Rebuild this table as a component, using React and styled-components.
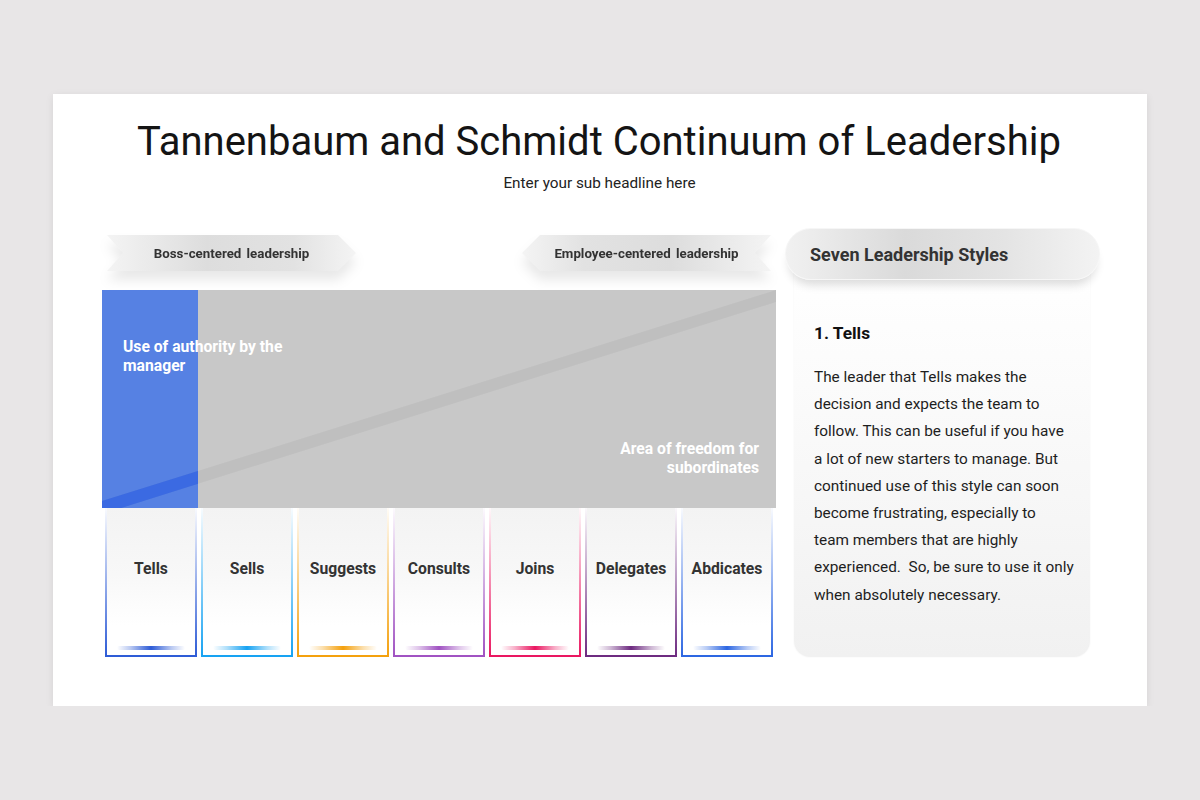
import React from "react";
import styled, { createGlobalStyle } from "styled-components";

const Global = createGlobalStyle`
  html, body { margin: 0; padding: 0; background: #e8e6e7; }
  body { font-family: Roboto, "Liberation Sans", Arial, sans-serif; }
`;

const Slide = styled.div`
  width: 1094px;
  height: 612px;
  margin: 94px auto 0;
  background: #fff;
  box-shadow: 0 2px 8px rgba(0, 0, 0, 0.08);
  box-sizing: border-box;
  padding: 0 47px 0 49px;
  display: flex;
  flex-direction: column;
`;

const Title = styled.h1`
  margin: 24px 0 0 -4px;
  font-family: Roboto, "Liberation Sans", sans-serif;
  font-weight: 400;
  font-size: 40px;
  line-height: 48px;
  color: #141414;
  text-align: center;
`;

const Sub = styled.div`
  margin: 7px 0 0 -3px;
  font-size: 15.3px;
  line-height: 20px;
  color: #222;
  text-align: center;
`;

const Main = styled.div`
  margin-top: 35px;
  display: flex;
  gap: 9px;
`;

const LeftCol = styled.div`
  width: 674px;
  padding-top: 7px;
  display: flex;
  flex-direction: column;
`;

const ArrowRow = styled.div`
  display: flex;
  justify-content: space-between;
  padding: 0 5px;
`;

const ArrowWrap = styled.div`
  filter: drop-shadow(0 9px 6px rgba(0, 0, 0, 0.09));
`;

const Arrow = styled.div`
  width: 249px;
  height: 36px;
  display: flex;
  align-items: center;
  justify-content: center;
  font-size: 13.3px;
  font-weight: 700;
  word-spacing: 2px;
  color: #333;
  background: ${(p) =>
    p.$dir === "right"
      ? "linear-gradient(90deg, #f4f4f4 0%, #dddddd 40%, #e2e2e2 75%, #f4f4f4 100%)"
      : "linear-gradient(90deg, #f4f4f4 0%, #e2e2e2 25%, #dddddd 60%, #f4f4f4 100%)"};
  clip-path: ${(p) =>
    p.$dir === "right"
      ? "polygon(0 0, calc(100% - 18px) 0, 100% 50%, calc(100% - 18px) 100%, 0 100%, 16px 50%)"
      : "polygon(18px 0, 100% 0, calc(100% - 16px) 50%, 100% 100%, 18px 100%, 0 50%)"};
`;

const Chart = styled.div`
  position: relative;
  margin-top: 19px;
  height: 218px;
  display: flex;
  overflow: hidden;
`;

const BlueCol = styled.div`
  width: 96px;
  background: #5681e3;
`;

const GrayArea = styled.div`
  flex: 1;
  background: #c8c8c8;
`;

const Band = styled.svg`
  position: absolute;
  left: 0;
  top: 0;
`;

const LabelLayer = styled.div`
  position: absolute;
  inset: 0;
  padding: 47px 17px 31px 21px;
  display: flex;
  flex-direction: column;
  justify-content: space-between;
`;

const ChartLabel = styled.div`
  font-size: 15.7px;
  font-weight: 700;
  line-height: 19px;
  color: #fff;
  text-align: ${(p) => (p.$right ? "right" : "left")};
  align-self: ${(p) => (p.$right ? "flex-end" : "flex-start")};
`;

const Cards = styled.div`
  display: flex;
  justify-content: space-between;
  padding: 0 3px;
`;

const Card = styled.div`
  width: 92px;
  height: 149px;
  box-sizing: border-box;
  padding: 0 2px 2px;
  display: flex;
  background: linear-gradient(to bottom, ${(p) => p.$c}08 0%, ${(p) => p.$c}66 40%, ${(p) => p.$c} 100%);
`;

const CardInner = styled.div`
  flex: 1;
  display: flex;
  flex-direction: column;
  align-items: center;
  padding-top: 50px;
  background: linear-gradient(to bottom, #f3f3f3 0%, #f8f8f8 45%, #ffffff 80%);
`;

const CardLabel = styled.div`
  font-size: 15.7px;
  font-weight: 700;
  line-height: 22px;
  color: #333;
  white-space: nowrap;
`;

const Glow = styled.div`
  margin-top: auto;
  margin-bottom: 5px;
  width: 68px;
  height: 4px;
  border-radius: 2px;
  background: linear-gradient(
    90deg,
    ${(p) => p.$c}00 0%,
    ${(p) => p.$c}55 20%,
    ${(p) => p.$c} 50%,
    ${(p) => p.$c}55 80%,
    ${(p) => p.$c}00 100%
  );
`;

const RightCol = styled.div`
  width: 315px;
  display: flex;
  flex-direction: column;
`;

const Pill = styled.div`
  position: relative;
  z-index: 1;
  height: 52px;
  border-radius: 26px;
  box-sizing: border-box;
  padding-left: 24px;
  display: flex;
  align-items: center;
  font-size: 18px;
  font-weight: 700;
  color: #333;
  border: 1px solid #f6f6f6;
  background: linear-gradient(90deg, #f1f1f1 0%, #dadada 38%, #e4e4e4 70%, #f3f3f3 100%);
  box-shadow: 0 9px 10px -4px rgba(0, 0, 0, 0.14);
`;

const Body = styled.div`
  margin: -12px 10px 0 9px;
  height: 389px;
  box-sizing: border-box;
  padding: 52px 20px 0;
  border-radius: 0 0 16px 16px;
  background: linear-gradient(to bottom, #ffffff 0%, #fbfbfb 30%, #f1f1f1 100%);
  box-shadow: 0 0 2px rgba(0, 0, 0, 0.06);
`;

const BodyTitle = styled.div`
  font-size: 17.3px;
  font-weight: 700;
  line-height: 26px;
  color: #111;
`;

const Para = styled.p`
  margin: 18px 0 0;
  font-size: 15.35px;
  line-height: 27.2px;
  color: #1e1e1e;
  white-space: nowrap;
`;

const cards = [
  { label: "Tells", c: "#2d5bd6" },
  { label: "Sells", c: "#16a2f2" },
  { label: "Suggests", c: "#f4a00c" },
  { label: "Consults", c: "#a052c2" },
  { label: "Joins", c: "#ea1660" },
  { label: "Delegates", c: "#6d2a80" },
  { label: "Abdicates", c: "#2c66e2" },
];

export default function App() {
  return (
    <>
      <Global />
      <Slide>
        <Title>Tannenbaum and Schmidt Continuum of Leadership</Title>
        <Sub>Enter your sub headline here</Sub>
        <Main>
          <LeftCol>
            <ArrowRow>
              <ArrowWrap>
                <Arrow $dir="right">Boss-centered leadership</Arrow>
              </ArrowWrap>
              <ArrowWrap>
                <Arrow $dir="left">Employee-centered leadership</Arrow>
              </ArrowWrap>
            </ArrowRow>
            <Chart>
              <BlueCol />
              <GrayArea />
              <Band width="674" height="218" viewBox="0 0 674 218">
                <defs>
                  <clipPath id="blueClip">
                    <rect x="0" y="0" width="96" height="218" />
                  </clipPath>
                </defs>
                <polygon points="0,211 674,0 674,12 0,224" fill="rgba(0,0,0,0.045)" />
                <polygon points="0,211 674,0 674,12 0,224" fill="#3b6ae2" clipPath="url(#blueClip)" />
              </Band>
              <LabelLayer>
                <ChartLabel>
                  Use of authority by the
                  <br />
                  manager
                </ChartLabel>
                <ChartLabel $right>
                  Area of freedom for
                  <br />
                  subordinates
                </ChartLabel>
              </LabelLayer>
            </Chart>
            <Cards>
              {cards.map((k) => (
                <Card key={k.label} $c={k.c}>
                  <CardInner>
                    <CardLabel>{k.label}</CardLabel>
                    <Glow $c={k.c} />
                  </CardInner>
                </Card>
              ))}
            </Cards>
          </LeftCol>
          <RightCol>
            <Pill>Seven Leadership Styles</Pill>
            <Body>
              <BodyTitle>1. Tells</BodyTitle>
              <Para>
                The leader that Tells makes the
                <br />
                decision and expects the team to
                <br />
                follow. This can be useful if you have
                <br />
                a lot of new starters to manage. But
                <br />
                continued use of this style can soon
                <br />
                become frustrating, especially to
                <br />
                team members that are highly
                <br />
                experienced.&nbsp; So, be sure to use it only
                <br />
                when absolutely necessary.
              </Para>
            </Body>
          </RightCol>
        </Main>
      </Slide>
    </>
  );
}
